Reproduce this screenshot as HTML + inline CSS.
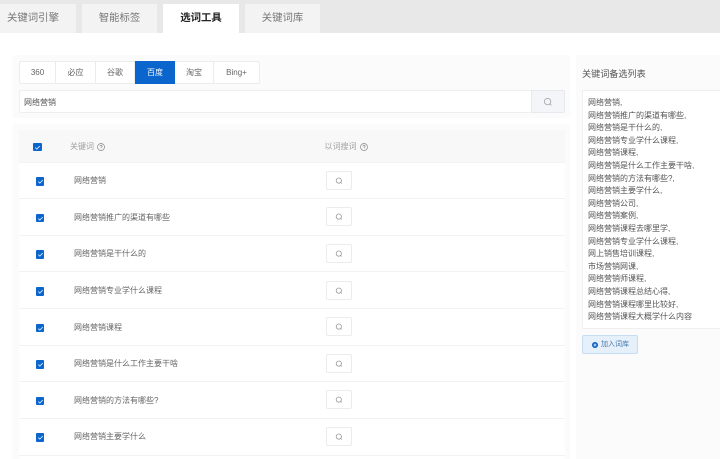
<!DOCTYPE html>
<html><head><meta charset="utf-8">
<style>
*{box-sizing:border-box;margin:0;padding:0}
html,body{width:720px;height:459px;overflow:hidden;background:#fff}
body{position:relative;font-family:"Liberation Sans","Noto Sans CJK SC",sans-serif;color:#666;filter:blur(.35px)}
.a{position:absolute;white-space:nowrap}
.tab{position:absolute;top:4px;height:29px;line-height:30px;text-align:center;font-size:10.4px;background:#f3f3f3;color:#777}
.eng{position:absolute;top:0;height:23px;line-height:24px;text-align:center;font-size:8px;color:#666;border-right:1px solid #ececec}
.cb{position:absolute;width:8.5px;height:8.5px;background:#0a66cc;border-radius:1px}
.cb svg{position:absolute;left:0;top:0}
.kw{position:absolute;left:74px;font-size:8px;color:#666;white-space:nowrap;line-height:12px}
.sb{position:absolute;left:326px;width:26px;height:19px;background:#fff;border:1px solid #ececec;border-radius:2px}
.sb svg{position:absolute;left:7px;top:4px}
.ln{position:absolute;left:19px;width:546px;height:1px;background:#f2f2f2}
</style></head><body>
<div class="a" style="left:0;top:0;width:720px;height:32.5px;background:#e8e8e8"></div>
<div class="tab" style="left:-10px;width:86px">关键词引擎</div>
<div class="tab" style="left:82px;width:75px">智能标签</div>
<div class="tab" style="left:163px;width:76px;background:#fff;color:#222;font-weight:bold">选词工具</div>
<div class="tab" style="left:245px;width:75px">关键词库</div>

<div class="a" style="left:13px;top:55px;width:557px;height:63px;background:#fbfbfb"></div>
<div class="a" style="left:13px;top:124px;width:557px;height:335px;background:#fbfbfb"></div>
<div class="a" style="left:576px;top:55px;width:144px;height:404px;background:#fbfbfb"></div>

<div class="a" style="left:19px;top:61px;width:241px;height:23px;background:#fff;border:1px solid #ececec;border-radius:2px">
<div class="eng" style="left:0;width:36px;top:-1px">360</div>
<div class="eng" style="left:36px;width:40px;top:-1px">必应</div>
<div class="eng" style="left:76px;width:39px;top:-1px">谷歌</div>
<div class="eng" style="left:115px;width:40px;top:-1px;background:#0a66cc;color:#fff;border:0">百度</div>
<div class="eng" style="left:155px;width:39px;top:-1px">淘宝</div>
<div class="eng" style="left:194px;width:45px;top:-1px;border:0">Bing+</div>
</div>

<div class="a" style="left:19px;top:90px;width:546px;height:23px;background:#fff;border:1px solid #efefef;border-radius:2px">
<div class="a" style="left:4px;top:0;line-height:23px;font-size:8px;color:#555">网络营销</div>
<div class="a" style="left:511px;top:-1px;width:34px;height:23px;background:#f4f5f9;border:1px solid #e8e9ef;border-radius:0 2px 2px 0">
<svg style="position:absolute;left:11px;top:6px" width="10" height="10" viewBox="0 0 10 10" fill="none" stroke="#a8a8a8" stroke-width=".9"><circle cx="4.6" cy="4.6" r="3.2"/><path d="M7 7l1.4 1.4"/></svg>
</div></div>

<div class="a" style="left:19px;top:130px;width:546px;height:329px;background:#fff"></div>
<div class="a" style="left:19px;top:130px;width:546px;height:32px;background:#f8f8f8"></div>
<div class="ln" style="top:161.5px"></div>
<div class="ln" style="top:198px"></div>
<div class="ln" style="top:234.5px"></div>
<div class="ln" style="top:271px"></div>
<div class="ln" style="top:308px"></div>
<div class="ln" style="top:344.5px"></div>
<div class="ln" style="top:381px"></div>
<div class="ln" style="top:418px"></div>
<div class="ln" style="top:454.5px"></div>

<div class="cb" style="left:33px;top:142.5px"><svg width="9" height="9" viewBox="0 0 9 9" fill="none" stroke="#cfe2fa" stroke-width=".9"><path d="M2.3 4.6l1.5 1.5 3-3"/></svg></div>
<div class="a" style="left:70px;top:141px;font-size:8px;line-height:12px;color:#a0a0a0">关键词</div>
<svg class="a" style="left:96px;top:142px" width="10" height="10" viewBox="0 0 10 10" fill="none" stroke="#888" stroke-width=".7"><circle cx="5" cy="5" r="3.5"/><path d="M3.9 4.2a1.1 1.1 0 1 1 1.6 1c-.4.2-.5.4-.5.8M5 6.9v.4"/></svg>
<div class="a" style="left:324.5px;top:141px;font-size:8px;line-height:12px;color:#a0a0a0">以词搜词</div>
<svg class="a" style="left:358.5px;top:142px" width="10" height="10" viewBox="0 0 10 10" fill="none" stroke="#888" stroke-width=".7"><circle cx="5" cy="5" r="3.5"/><path d="M3.9 4.2a1.1 1.1 0 1 1 1.6 1c-.4.2-.5.4-.5.8M5 6.9v.4"/></svg>

<div class="cb" style="left:35.5px;top:177px"><svg width="9" height="9" viewBox="0 0 9 9" fill="none" stroke="#cfe2fa" stroke-width=".9"><path d="M2.3 4.6l1.5 1.5 3-3"/></svg></div>
<div class="kw" style="top:175px">网络营销</div>
<div class="sb" style="top:170.5px"><svg width="10" height="10" viewBox="0 0 10 10" fill="none" stroke="#999" stroke-width=".8"><circle cx="4.8" cy="4.6" r="2.6"/><path d="M6.7 6.5l1 1"/></svg></div>

<div class="cb" style="left:35.5px;top:213.5px"><svg width="9" height="9" viewBox="0 0 9 9" fill="none" stroke="#cfe2fa" stroke-width=".9"><path d="M2.3 4.6l1.5 1.5 3-3"/></svg></div>
<div class="kw" style="top:211.5px">网络营销推广的渠道有哪些</div>
<div class="sb" style="top:207px"><svg width="10" height="10" viewBox="0 0 10 10" fill="none" stroke="#999" stroke-width=".8"><circle cx="4.8" cy="4.6" r="2.6"/><path d="M6.7 6.5l1 1"/></svg></div>

<div class="cb" style="left:35.5px;top:250px"><svg width="9" height="9" viewBox="0 0 9 9" fill="none" stroke="#cfe2fa" stroke-width=".9"><path d="M2.3 4.6l1.5 1.5 3-3"/></svg></div>
<div class="kw" style="top:248px">网络营销是干什么的</div>
<div class="sb" style="top:243.5px"><svg width="10" height="10" viewBox="0 0 10 10" fill="none" stroke="#999" stroke-width=".8"><circle cx="4.8" cy="4.6" r="2.6"/><path d="M6.7 6.5l1 1"/></svg></div>

<div class="cb" style="left:35.5px;top:287px"><svg width="9" height="9" viewBox="0 0 9 9" fill="none" stroke="#cfe2fa" stroke-width=".9"><path d="M2.3 4.6l1.5 1.5 3-3"/></svg></div>
<div class="kw" style="top:284.5px">网络营销专业学什么课程</div>
<div class="sb" style="top:280.5px"><svg width="10" height="10" viewBox="0 0 10 10" fill="none" stroke="#999" stroke-width=".8"><circle cx="4.8" cy="4.6" r="2.6"/><path d="M6.7 6.5l1 1"/></svg></div>

<div class="cb" style="left:35.5px;top:323.5px"><svg width="9" height="9" viewBox="0 0 9 9" fill="none" stroke="#cfe2fa" stroke-width=".9"><path d="M2.3 4.6l1.5 1.5 3-3"/></svg></div>
<div class="kw" style="top:321.5px">网络营销课程</div>
<div class="sb" style="top:317px"><svg width="10" height="10" viewBox="0 0 10 10" fill="none" stroke="#999" stroke-width=".8"><circle cx="4.8" cy="4.6" r="2.6"/><path d="M6.7 6.5l1 1"/></svg></div>

<div class="cb" style="left:35.5px;top:360px"><svg width="9" height="9" viewBox="0 0 9 9" fill="none" stroke="#cfe2fa" stroke-width=".9"><path d="M2.3 4.6l1.5 1.5 3-3"/></svg></div>
<div class="kw" style="top:358px">网络营销是什么工作主要干啥</div>
<div class="sb" style="top:353.5px"><svg width="10" height="10" viewBox="0 0 10 10" fill="none" stroke="#999" stroke-width=".8"><circle cx="4.8" cy="4.6" r="2.6"/><path d="M6.7 6.5l1 1"/></svg></div>

<div class="cb" style="left:35.5px;top:396.5px"><svg width="9" height="9" viewBox="0 0 9 9" fill="none" stroke="#cfe2fa" stroke-width=".9"><path d="M2.3 4.6l1.5 1.5 3-3"/></svg></div>
<div class="kw" style="top:394.5px">网络营销的方法有哪些?</div>
<div class="sb" style="top:390px"><svg width="10" height="10" viewBox="0 0 10 10" fill="none" stroke="#999" stroke-width=".8"><circle cx="4.8" cy="4.6" r="2.6"/><path d="M6.7 6.5l1 1"/></svg></div>

<div class="cb" style="left:35.5px;top:433px"><svg width="9" height="9" viewBox="0 0 9 9" fill="none" stroke="#cfe2fa" stroke-width=".9"><path d="M2.3 4.6l1.5 1.5 3-3"/></svg></div>
<div class="kw" style="top:431px">网络营销主要学什么</div>
<div class="sb" style="top:427px"><svg width="10" height="10" viewBox="0 0 10 10" fill="none" stroke="#999" stroke-width=".8"><circle cx="4.8" cy="4.6" r="2.6"/><path d="M6.7 6.5l1 1"/></svg></div>

<div class="a" style="left:582px;top:67px;font-size:9.1px;line-height:14px;color:#555">关键词备选列表</div>
<div class="a" style="left:582px;top:90px;width:140px;height:239px;background:#fff;border:1px solid #efefef;padding:6px 0 0 5px;font-size:8px;line-height:12.6px;color:#555">网络营销,<br>网络营销推广的渠道有哪些,<br>网络营销是干什么的,<br>网络营销专业学什么课程,<br>网络营销课程,<br>网络营销是什么工作主要干啥,<br>网络营销的方法有哪些?,<br>网络营销主要学什么,<br>网络营销公司,<br>网络营销案例,<br>网络营销课程去哪里学,<br>网络营销专业学什么课程,<br>网上销售培训课程,<br>市场营销网课,<br>网络营销师课程,<br>网络营销课程总结心得,<br>网络营销课程哪里比较好,<br>网络营销课程大概学什么内容</div>
<div class="a" style="left:582px;top:335px;width:56px;height:19px;background:#e6f0fb;border:1px solid #c4dcf5;border-radius:2px">
<svg style="position:absolute;left:8px;top:5px" width="8" height="8" viewBox="0 0 8 8"><circle cx="4" cy="4" r="3" fill="#0a5fc0"/><path d="M2.5 4h3M4 2.5v3" stroke="#fff" stroke-width=".8"/></svg>
<div class="a" style="left:18px;top:0;line-height:17px;font-size:7px;color:#4a78ad">加入词库</div>
</div>
</body></html>
